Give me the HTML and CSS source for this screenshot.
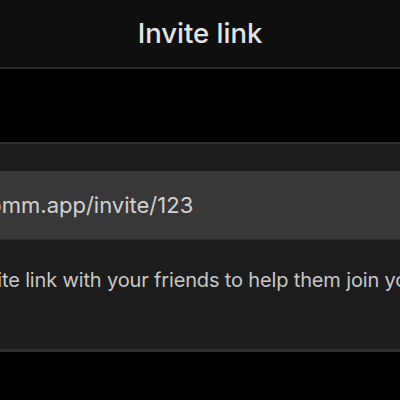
FILE: index.html
```html
<!DOCTYPE html>
<html lang="en">
<head>
<meta charset="utf-8">
<title>Invite link</title>
<link rel="stylesheet" href="styles.css">
</head>
<body>
<div class="screen">
  <header class="nav">
    <h1 class="nav-title">Invite link</h1>
  </header>
  <div class="spacer"></div>
  <section class="group">
    <div class="group-top"></div>
    <div class="link-row">
      <span class="link-text">comm.app/invite/123</span>
    </div>
    <div class="desc">
      <p class="desc-text">Share this invite link with your friends to help them join your community!</p>
    </div>
  </section>
</div>
</body>
</html>
```
FILE: styles.css
```css
html, body {
  margin: 0;
  padding: 0;
  background: #000;
}
.screen {
  width: 400px;
  height: 400px;
  overflow: hidden;
  font-family: "Inter", "Liberation Sans", sans-serif;
  background: #000;
}
.nav {
  height: 67px;
  background: #0f0f0f;
  border-bottom: 2px solid #2b2b2b;
  display: flex;
  align-items: center;
  justify-content: center;
}
.nav-title {
  margin: 0;
  font-size: 27.5px;
  font-weight: 500;
  color: #e4e4e4;
  padding-bottom: 2px;
}
.spacer {
  height: 73px;
}
.group {
  background: #1c1c1c;
  border-top: 2px solid #2c2c2c;
  border-bottom: 3px solid #303030;
}
.group-top {
  height: 27px;
}
.link-row {
  height: 68px;
  background: #383838;
  border-bottom: 1px solid #2a2a2a;
  display: flex;
  align-items: center;
  overflow: hidden;
  white-space: nowrap;
}
.link-text {
  margin-left: -24px;
  font-size: 22px;
  color: #d2d2d2;
}
.desc {
  height: 109px;
  overflow: hidden;
  white-space: nowrap;
}
.desc-text {
  margin: 0 0 0 -128px;
  padding-top: 28px;
  font-size: 20px;
  letter-spacing: -0.15px;
  line-height: 24px;
  color: #c8c8c8;
}
```
